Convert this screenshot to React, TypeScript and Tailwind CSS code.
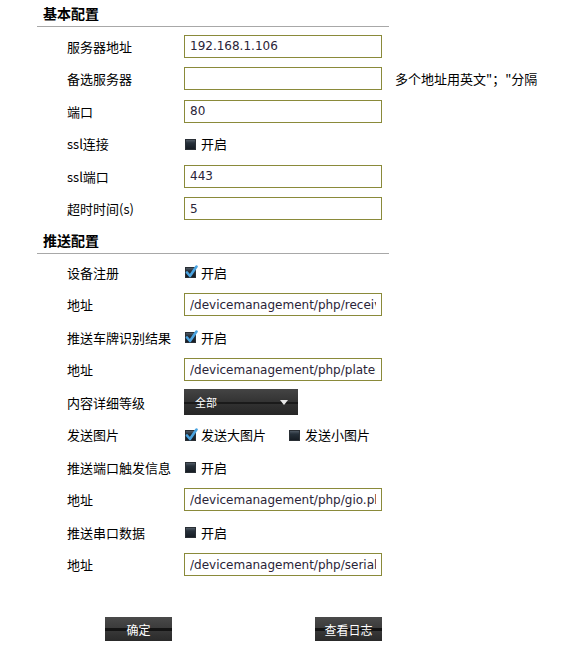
import { ReactNode } from "react";

const cjk = "font-['Noto_Sans_CJK_SC',sans-serif]";

function Box({ checked }: { checked?: boolean }) {
  return (
    <svg width="14" height="14" viewBox="0 0 14 14" className="shrink-0">
      <defs>
        <linearGradient id="boxg" x1="0" y1="0" x2="0" y2="1">
          <stop offset="0" stopColor="#56606b" />
          <stop offset="0.35" stopColor="#26303a" />
          <stop offset="1" stopColor="#151b22" />
        </linearGradient>
      </defs>
      <rect x="1.5" y="2.5" width="10" height="10" fill="url(#boxg)" stroke="#2a2f35" />
      {checked && (
        <path
          d="M3 7.5 L6 11 L12.5 1.5"
          fill="none"
          stroke="#4aa3e0"
          strokeWidth="2.6"
          strokeLinecap="round"
          strokeLinejoin="round"
        />
      )}
    </svg>
  );
}

function Check({ checked, label }: { checked?: boolean; label: string }) {
  return (
    <span className="flex items-center gap-[3px]">
      <Box checked={checked} />
      <span className={`${cjk} text-[13px] text-black`}>{label}</span>
    </span>
  );
}

function Field({ value }: { value: string }) {
  return (
    <input
      readOnly
      defaultValue={value}
      className="w-[198px] h-[23px] border border-[#8a8a3a] px-[5px] font-['DejaVu_Sans',sans-serif] text-[12px] text-[#2a2438] outline-none bg-white"
    />
  );
}

function Row({ label, children }: { label: string; children: ReactNode }) {
  return (
    <div className="flex items-center h-[32.5px] pl-[30px]">
      <div className={`w-[117px] shrink-0 ${cjk} text-[13px] text-black`}>{label}</div>
      {children}
    </div>
  );
}

function Header({ title }: { title: string }) {
  return (
    <div className="h-[27px] border-b border-[#a8a8a8] pl-[6px] flex items-start">
      <span className={`${cjk} font-bold text-[14px] leading-[26px] text-black`}>{title}</span>
    </div>
  );
}

function DarkButton({ label }: { label: string }) {
  return (
    <button className="relative w-[67px] h-[24px] bg-gradient-to-b from-[#4a4a4a] via-[#3a3a3a] to-[#2a2a2a] overflow-hidden">
      <span className="absolute left-0 right-0 top-[11px] h-[3px] bg-[#141414]" />
      <span className={`relative ${cjk} text-[12px] text-white`}>{label}</span>
    </button>
  );
}

export default function App() {
  return (
    <div className="w-[584px] h-[660px] bg-white">
      <div className="w-[352px] ml-[37px]">
        <Header title="基本配置" />
        <div className="pt-[3px]">
          <Row label="服务器地址">
            <Field value="192.168.1.106" />
          </Row>
          <Row label="备选服务器">
            <div className="flex items-center">
              <Field value="" />
              <span className={`ml-[13px] whitespace-nowrap ${cjk} text-[13px] text-black`}>
                多个地址用英文"；"分隔
              </span>
            </div>
          </Row>
          <Row label="端口">
            <Field value="80" />
          </Row>
          <Row label="ssl连接">
            <Check label="开启" />
          </Row>
          <Row label="ssl端口">
            <Field value="443" />
          </Row>
          <Row label="超时时间(s)">
            <Field value="5" />
          </Row>
        </div>

        <div className="mt-[2px]">
          <Header title="推送配置" />
        </div>
        <div className="pt-[2px]">
          <Row label="设备注册">
            <Check checked label="开启" />
          </Row>
          <Row label="地址">
            <Field value="/devicemanagement/php/receiveDeviceInfo.php" />
          </Row>
          <Row label="推送车牌识别结果">
            <Check checked label="开启" />
          </Row>
          <Row label="地址">
            <Field value="/devicemanagement/php/plateresult.php" />
          </Row>
          <Row label="内容详细等级">
            <div className="relative w-[114px] h-[26px] bg-gradient-to-b from-[#444] via-[#333] to-[#262626] flex items-center px-[11px]">
              <span className="absolute left-0 right-0 top-[13px] h-[2px] bg-[#1a1a1a]" />
              <span className={`relative ${cjk} text-[11px] text-white`}>全部</span>
              <svg width="8" height="5" viewBox="0 0 8 5" className="relative ml-auto mr-[-1px]">
                <path d="M0 0 H8 L4 5 Z" fill="#e8e8e8" />
              </svg>
            </div>
          </Row>
          <Row label="发送图片">
            <div className="flex items-center">
              <div className="w-[104px]">
                <Check checked label="发送大图片" />
              </div>
              <Check label="发送小图片" />
            </div>
          </Row>
          <Row label="推送端口触发信息">
            <Check label="开启" />
          </Row>
          <Row label="地址">
            <Field value="/devicemanagement/php/gio.php" />
          </Row>
          <Row label="推送串口数据">
            <Check label="开启" />
          </Row>
          <Row label="地址">
            <Field value="/devicemanagement/php/serialdata.php" />
          </Row>
        </div>

        <div className="flex justify-between mt-[36px] pl-[68px] pr-[7px]">
          <DarkButton label="确定" />
          <DarkButton label="查看日志" />
        </div>
      </div>
    </div>
  );
}
